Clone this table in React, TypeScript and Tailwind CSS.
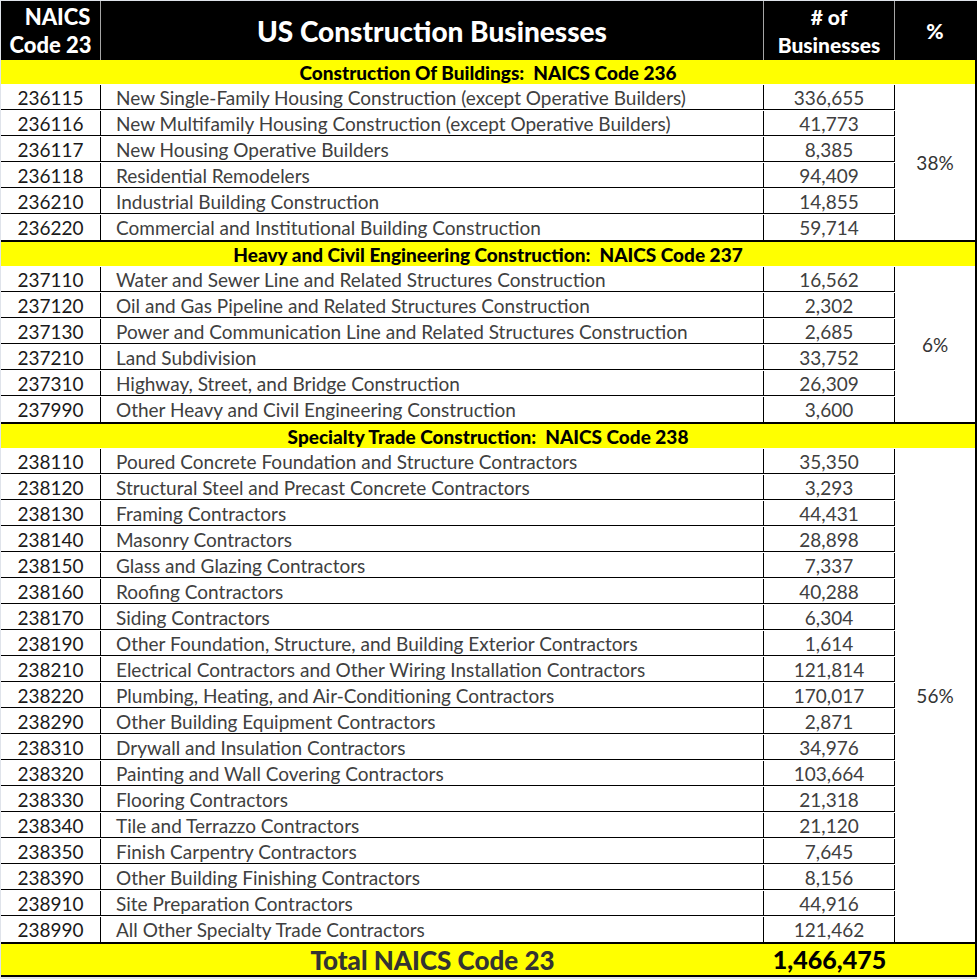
import React from "react";

type Row = { code: string; name: string; count: string };

type Section = { title: string; pct: string; rows: Row[] };

const sections: Section[] = [
  {
    title: "Construction Of Buildings:  NAICS Code 236",
    pct: "38%",
    rows: [
      { code: "236115", name: "New Single-Family Housing Construction (except Operative Builders)", count: "336,655" },
      { code: "236116", name: "New Multifamily Housing Construction (except Operative Builders)", count: "41,773" },
      { code: "236117", name: "New Housing Operative Builders", count: "8,385" },
      { code: "236118", name: "Residential Remodelers", count: "94,409" },
      { code: "236210", name: "Industrial Building Construction", count: "14,855" },
      { code: "236220", name: "Commercial and Institutional Building Construction", count: "59,714" },
    ],
  },
  {
    title: "Heavy and Civil Engineering Construction:  NAICS Code 237",
    pct: "6%",
    rows: [
      { code: "237110", name: "Water and Sewer Line and Related Structures Construction", count: "16,562" },
      { code: "237120", name: "Oil and Gas Pipeline and Related Structures Construction", count: "2,302" },
      { code: "237130", name: "Power and Communication Line and Related Structures Construction", count: "2,685" },
      { code: "237210", name: "Land Subdivision", count: "33,752" },
      { code: "237310", name: "Highway, Street, and Bridge Construction", count: "26,309" },
      { code: "237990", name: "Other Heavy and Civil Engineering Construction", count: "3,600" },
    ],
  },
  {
    title: "Specialty Trade Construction:  NAICS Code 238",
    pct: "56%",
    rows: [
      { code: "238110", name: "Poured Concrete Foundation and Structure Contractors", count: "35,350" },
      { code: "238120", name: "Structural Steel and Precast Concrete Contractors", count: "3,293" },
      { code: "238130", name: "Framing Contractors", count: "44,431" },
      { code: "238140", name: "Masonry Contractors", count: "28,898" },
      { code: "238150", name: "Glass and Glazing Contractors", count: "7,337" },
      { code: "238160", name: "Roofing Contractors", count: "40,288" },
      { code: "238170", name: "Siding Contractors", count: "6,304" },
      { code: "238190", name: "Other Foundation, Structure, and Building Exterior Contractors", count: "1,614" },
      { code: "238210", name: "Electrical Contractors and Other Wiring Installation Contractors", count: "121,814" },
      { code: "238220", name: "Plumbing, Heating, and Air-Conditioning Contractors", count: "170,017" },
      { code: "238290", name: "Other Building Equipment Contractors", count: "2,871" },
      { code: "238310", name: "Drywall and Insulation Contractors", count: "34,976" },
      { code: "238320", name: "Painting and Wall Covering Contractors", count: "103,664" },
      { code: "238330", name: "Flooring Contractors", count: "21,318" },
      { code: "238340", name: "Tile and Terrazzo Contractors", count: "21,120" },
      { code: "238350", name: "Finish Carpentry Contractors", count: "7,645" },
      { code: "238390", name: "Other Building Finishing Contractors", count: "8,156" },
      { code: "238910", name: "Site Preparation Contractors", count: "44,916" },
      { code: "238990", name: "All Other Specialty Trade Contractors", count: "121,462" },
    ],
  },
];

const body = "font-['Lato','Liberation_Sans',sans-serif]";
const heading = "font-['Lato','Open_Sans',sans-serif] font-black";

function SectionBlock({ s }: { s: Section }) {
  return (
    <div className="border-b-2 border-black">
      <div className={`h-[24px] bg-[#ffff00] flex items-center justify-center text-[19px] text-black whitespace-pre ${heading}`}>
        {s.title}
      </div>
      <div className="flex">
        <div className="w-[894px]">
          {s.rows.map((r, i) => (
            <div key={r.code} className={`flex h-[26px] pt-px ${i < s.rows.length - 1 ? "border-b border-black" : ""}`}>
              <div className="w-[100px] border-r border-black flex items-center justify-center text-[#1a1a1a]">{r.code}</div>
              <div className="w-[663px] border-r border-black flex items-center pl-[15px] text-[#404040] whitespace-nowrap">{r.name}</div>
              <div className="w-[131px] border-r border-black flex items-center justify-center text-[#404040]">{r.count}</div>
            </div>
          ))}
        </div>
        <div className="flex-1 flex items-center justify-center text-[#333]">{s.pct}</div>
      </div>
    </div>
  );
}

export default function App() {
  return (
    <div className={`w-[977px] h-[979px] bg-[#dfe3ea] pt-px pl-px ${body} text-[19px] leading-none`}>
      <div className="w-[976px] bg-white border-r-2 border-b-2 border-black">
        {/* header */}
        <div className={`flex h-[59px] bg-black text-white ${heading}`}>
          <div className="w-[100px] border-r border-[#a6a6a6] flex flex-col items-center justify-center text-[22px] leading-[28px]">
            <span className="pl-[14px]">NAICS</span>
            <span>Code 23</span>
          </div>
          <div className="w-[663px] border-r border-[#a6a6a6] flex items-center justify-center text-[28px]">
            US Construction Businesses
          </div>
          <div className="w-[131px] border-r border-[#a6a6a6] flex flex-col items-center justify-center text-[21px] leading-[28px]">
            <span># of</span>
            <span>Businesses</span>
          </div>
          <div className="flex-1 flex items-center justify-center text-[21px]">%</div>
        </div>

        {sections.map((s) => (
          <SectionBlock key={s.title} s={s} />
        ))}

        {/* total */}
        <div className={`flex h-[31px] bg-[#ffff00] ${heading}`}>
          <div className="w-[100px]" />
          <div className="w-[663px] flex items-center justify-center text-[#333] text-[26px]">Total NAICS Code 23</div>
          <div className="w-[131px] flex items-center justify-center text-black text-[25px]">1,466,475</div>
          <div className="flex-1" />
        </div>
      </div>
    </div>
  );
}
